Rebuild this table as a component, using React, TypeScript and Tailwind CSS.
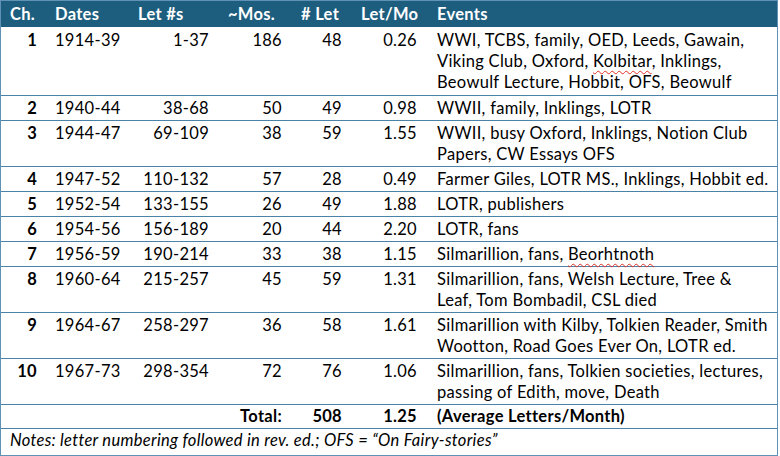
import React from "react";

type Row = {
  ch: string;
  dates: string;
  lets: string;
  mos: string;
  count: string;
  perMo: string;
  events: React.ReactNode[];
};

// red squiggle like a spell checker mark
const Sq = ({ children }: { children: React.ReactNode }) => (
  <span className="underline decoration-wavy decoration-[#e0302a] decoration-1 underline-offset-[3px]">
    {children}
  </span>
);

const rows: Row[] = [
  {
    ch: "1",
    dates: "1914-39",
    lets: "1-37",
    mos: "186",
    count: "48",
    perMo: "0.26",
    events: [
      "WWI, TCBS, family, OED, Leeds, Gawain,",
      <>
        Viking Club, Oxford, <Sq>Kolbitar</Sq>, Inklings,
      </>,
      "Beowulf Lecture, Hobbit, OFS, Beowulf",
    ],
  },
  { ch: "2", dates: "1940-44", lets: "38-68", mos: "50", count: "49", perMo: "0.98", events: ["WWII, family, Inklings, LOTR"] },
  {
    ch: "3",
    dates: "1944-47",
    lets: "69-109",
    mos: "38",
    count: "59",
    perMo: "1.55",
    events: ["WWII, busy Oxford, Inklings, Notion Club", "Papers, CW Essays OFS"],
  },
  { ch: "4", dates: "1947-52", lets: "110-132", mos: "57", count: "28", perMo: "0.49", events: ["Farmer Giles, LOTR MS., Inklings, Hobbit ed."] },
  { ch: "5", dates: "1952-54", lets: "133-155", mos: "26", count: "49", perMo: "1.88", events: ["LOTR, publishers"] },
  { ch: "6", dates: "1954-56", lets: "156-189", mos: "20", count: "44", perMo: "2.20", events: ["LOTR, fans"] },
  {
    ch: "7",
    dates: "1956-59",
    lets: "190-214",
    mos: "33",
    count: "38",
    perMo: "1.15",
    events: [
      <>
        Silmarillion, fans, <Sq>Beorhtnoth</Sq>
      </>,
    ],
  },
  {
    ch: "8",
    dates: "1960-64",
    lets: "215-257",
    mos: "45",
    count: "59",
    perMo: "1.31",
    events: ["Silmarillion, fans, Welsh Lecture, Tree &", "Leaf, Tom Bombadil, CSL died"],
  },
  {
    ch: "9",
    dates: "1964-67",
    lets: "258-297",
    mos: "36",
    count: "58",
    perMo: "1.61",
    events: ["Silmarillion with Kilby, Tolkien Reader, Smith", "Wootton, Road Goes Ever On, LOTR ed."],
  },
  {
    ch: "10",
    dates: "1967-73",
    lets: "298-354",
    mos: "72",
    count: "76",
    perMo: "1.06",
    events: ["Silmarillion, fans, Tolkien societies, lectures,", "passing of Edith, move, Death"],
  },
];

const cols = "grid grid-cols-[46px_81px_90px_73px_60px_76px_1fr]";

// row height by number of event lines
const heights: Record<number, string> = {
  1: "h-[25px] pt-[2px]",
  2: "h-[46px] pt-[2px]",
  3: "h-[69px] pt-[3px]",
};

export default function App() {
  return (
    <div className="bg-white w-[780px] h-[456px] text-black text-[16.5px] tracking-[0.3px] leading-[21px] font-['Lato','Liberation_Sans',sans-serif]">
      <div className="w-[778px] h-[456px] flex flex-col border border-[#5f92b4]">
        {/* Header */}
        <div className={`${cols} h-[26px] shrink-0 items-center bg-[#1d5e7f] text-white font-bold`}>
          <div className="pl-[9px]">Ch.</div>
          <div className="pl-[8px]">Dates</div>
          <div className="pl-[10px]">Let #s</div>
          <div className="pl-[10px]">~Mos.</div>
          <div className="pl-[10px]"># Let</div>
          <div className="pl-[10px]">Let/Mo</div>
          <div className="pl-[10px]">Events</div>
        </div>

        {/* Chapters */}
        {rows.map((r) => (
          <div
            key={r.ch}
            className={`${cols} ${heights[r.events.length]} shrink-0 items-start border-b border-[#4a82a8]`}
          >
            <div className="pr-[10px] text-right font-bold">{r.ch}</div>
            <div className="pl-[8px]">{r.dates}</div>
            <div className="pr-[9px] text-right">{r.lets}</div>
            <div className="pr-[9px] text-right">{r.mos}</div>
            <div className="pr-[9px] text-right">{r.count}</div>
            <div className="pr-[10px] text-right">{r.perMo}</div>
            <div className="pl-[10px] whitespace-nowrap">
              {r.events.map((line, i) => (
                <div key={i}>{line}</div>
              ))}
            </div>
          </div>
        ))}

        {/* Total */}
        <div className={`${cols} h-[24px] shrink-0 items-center border-b border-[#4a82a8] font-bold`}>
          <div />
          <div />
          <div />
          <div className="pr-[9px] text-right">Total:</div>
          <div className="pr-[9px] text-right">508</div>
          <div className="pr-[10px] text-right">1.25</div>
          <div className="pl-[10px]">(Average Letters/Month)</div>
        </div>

        {/* Notes */}
        <div className="flex-1 pl-[9px] pt-[1px] italic">
          Notes: letter numbering followed in rev. ed.; OFS = “On Fairy-stories”
        </div>
      </div>
    </div>
  );
}
